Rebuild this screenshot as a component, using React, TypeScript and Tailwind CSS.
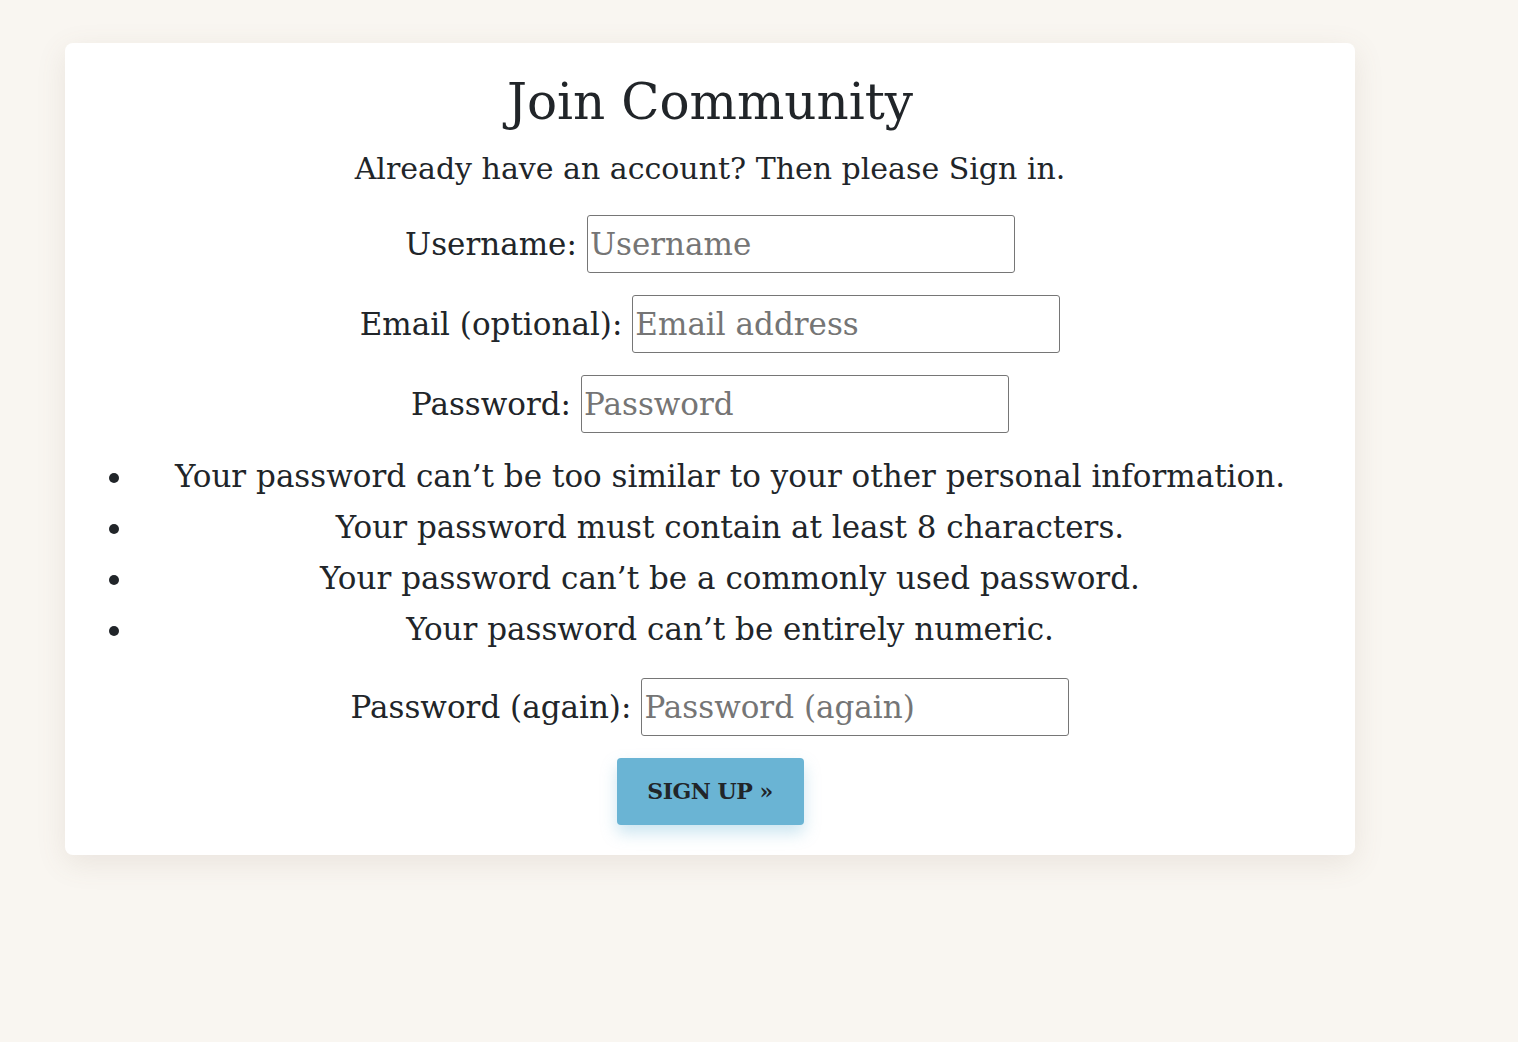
import React from "react";

const font = { fontFamily: '"DejaVu Serif", "Liberation Serif", serif' };

function Row({ label, placeholder, type = "text" }: { label: string; placeholder: string; type?: string }) {
  return (
    <div className="flex items-center justify-center gap-[10px]">
      <label className="text-[31px] leading-[51px] text-[#212529]">{label}</label>
      <input
        type={type}
        placeholder={placeholder}
        className="h-[58px] w-[428px] rounded-[3px] border border-[#767676] bg-white px-[2px] text-[31px] text-[#212529] placeholder:text-[#757575] outline-none"
        style={font}
      />
    </div>
  );
}

export default function App() {
  const rules = [
    "Your password can’t be too similar to your other personal information.",
    "Your password must contain at least 8 characters.",
    "Your password can’t be a commonly used password.",
    "Your password can’t be entirely numeric.",
  ];
  return (
    <div className="min-h-[1042px] w-full bg-[#f9f6f1] pt-[43px] pl-[65px]" style={font}>
      <div className="w-[1290px] rounded-[8px] bg-white px-[30px] pt-[28px] pb-[30px] text-center text-[#212529] shadow-[0_8px_30px_rgba(120,100,80,0.12)]">
        <h1 className="text-[50px] leading-[62px]">Join Community</h1>
        <p className="mt-[10px] text-[30px] leading-[51px]">Already have an account? Then please Sign in.</p>
        <form className="mt-[21px] flex flex-col gap-[22px]">
          <Row label="Username:" placeholder="Username" />
          <Row label="Email (optional):" placeholder="Email address" type="email" />
          <Row label="Password:" placeholder="Password" type="password" />
          <ul className="-mt-[4px] mb-[1px] list-disc pl-[40px] text-[31px] leading-[51px]">
            {rules.map((r) => (
              <li key={r}>{r}</li>
            ))}
          </ul>
          <Row label="Password (again):" placeholder="Password (again)" type="password" />
          <div className="flex justify-center">
            <button
              type="button"
              className="h-[67px] w-[187px] rounded-[4px] bg-[#6ab4d4] text-[22px] font-bold tracking-[-0.5px] text-[#212529] shadow-[0_8px_16px_rgba(106,180,212,0.35)]"
              style={font}
            >
              SIGN UP »
            </button>
          </div>
        </form>
      </div>
    </div>
  );
}
